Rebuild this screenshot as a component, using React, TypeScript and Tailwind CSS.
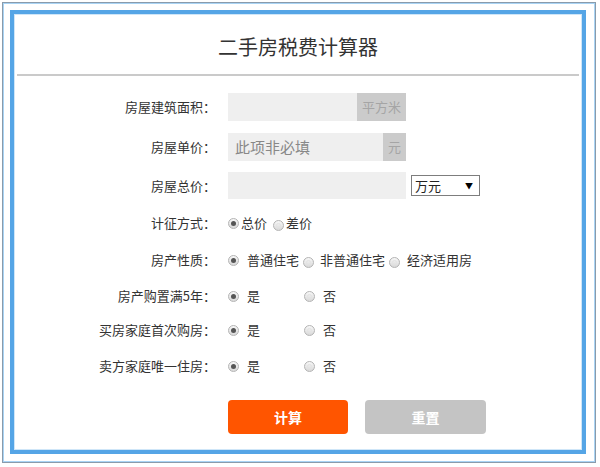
import React from 'react'

const font = { fontFamily: '"Noto Sans CJK SC", "Noto Sans", sans-serif' }

function Radio({ checked }: { checked?: boolean }) {
  return (
    <span className="inline-flex h-[11px] w-[11px] shrink-0 items-center justify-center rounded-full border border-[#b4b4b4] bg-gradient-to-b from-[#f7f7f7] to-[#d9d9d9]">
      {checked ? (
        <span className="h-[5px] w-[5px] rounded-full bg-[#555]" />
      ) : (
        <span className="h-[5px] w-[5px] rounded-full border border-[#e3e3e3]" />
      )}
    </span>
  )
}

function Label({ children }: { children: React.ReactNode }) {
  return <div className="w-[202px] shrink-0 text-right text-[13px] text-[#333]">{children}</div>
}

const yesNoRows = [
  { label: '房产购置满5年：', mt: 'mt-[16px]' },
  { label: '买房家庭首次购房：', mt: 'mt-[14px]' },
  { label: '卖方家庭唯一住房：', mt: 'mt-[16px]' },
]

export default function App() {
  return (
    <div className="h-[467px] w-[600px] bg-white pl-[2px] pt-[2px]" style={font}>
      <div className="h-[461px] w-[594px] border border-[#8a9bab] p-[7px] shadow-[inset_0_0_0_1px_#a9d4f5]">
        <div className="h-[444px] w-[576px] border-4 border-[#55a5e6] shadow-[inset_0_0_0_1px_#cfe6f8]">
          <div className="flex h-[60px] items-center justify-center pt-[6px] text-[20px] text-[#333]">
            二手房税费计算器
          </div>
          <div className="mx-[3px] h-[2px] bg-[#cacaca]" />

          {/* 房屋建筑面积 */}
          <div className="mt-[17px] flex h-[28px] items-center">
            <Label>房屋建筑面积：</Label>
            <div className="ml-[12px] flex h-[28px]">
              <div className="w-[129px] bg-[#efefef]" />
              <div className="flex w-[49px] items-center justify-center bg-[#cbcbcb] text-[13px] text-[#a5a5a5]">平方米</div>
            </div>
          </div>

          {/* 房屋单价 */}
          <div className="mt-[12px] flex h-[28px] items-center">
            <Label>房屋单价：</Label>
            <div className="ml-[12px] flex h-[28px]">
              <div className="flex w-[155px] items-center bg-[#efefef] pl-[7px] text-[15px] text-[#888]">此项非必填</div>
              <div className="flex w-[23px] items-center justify-center bg-[#cbcbcb] text-[13px] text-[#a5a5a5]">元</div>
            </div>
          </div>

          {/* 房屋总价 */}
          <div className="mt-[11px] flex h-[27px] items-center">
            <Label>房屋总价：</Label>
            <div className="ml-[12px] h-[27px] w-[178px] bg-[#efefef]" />
            <div className="ml-[5px] flex h-[21px] w-[69px] items-center justify-between border border-[#7d7d7d] bg-white pl-[3px] pr-[6px] text-[13px] text-[#222]">
              <span>万元</span>
              <span className="text-[8px] text-black">▼</span>
            </div>
          </div>

          {/* 计征方式 */}
          <div className="mt-[14px] flex h-[20px] items-center">
            <Label>计征方式：</Label>
            <div className="ml-[12px] flex items-center text-[13px] text-[#333]">
              <Radio checked />
              <span className="ml-[2px]">总价</span>
              <span className="ml-[6px]"><Radio /></span>
              <span className="ml-[2px]">差价</span>
            </div>
          </div>

          {/* 房产性质 */}
          <div className="mt-[17px] flex h-[20px] items-center">
            <Label>房产性质：</Label>
            <div className="ml-[12px] flex items-center text-[13px] text-[#333]">
              <Radio checked />
              <span className="ml-[8px]">普通住宅</span>
              <span className="ml-[4px]"><Radio /></span>
              <span className="ml-[6px]">非普通住宅</span>
              <span className="ml-[4px]"><Radio /></span>
              <span className="ml-[7px]">经济适用房</span>
            </div>
          </div>

          {yesNoRows.map((row) => (
            <div key={row.label} className={`flex h-[20px] items-center ${row.mt}`}>
              <Label>{row.label}</Label>
              <div className="ml-[12px] flex items-center text-[13px] text-[#333]">
                <Radio checked />
                <span className="ml-[8px] w-[57px]">是</span>
                <Radio />
                <span className="ml-[8px]">否</span>
              </div>
            </div>
          ))}

          {/* buttons */}
          <div className="mt-[24px] flex">
            <div className="ml-[214px] flex h-[34px] w-[120px] items-center justify-center rounded-[4px] bg-[#ff5500] text-[14px] font-bold text-white">
              计算
            </div>
            <div className="ml-[17px] flex h-[34px] w-[121px] items-center justify-center rounded-[4px] bg-[#c4c4c4] text-[14px] font-bold text-white">
              重置
            </div>
          </div>
        </div>
      </div>
    </div>
  )
}
